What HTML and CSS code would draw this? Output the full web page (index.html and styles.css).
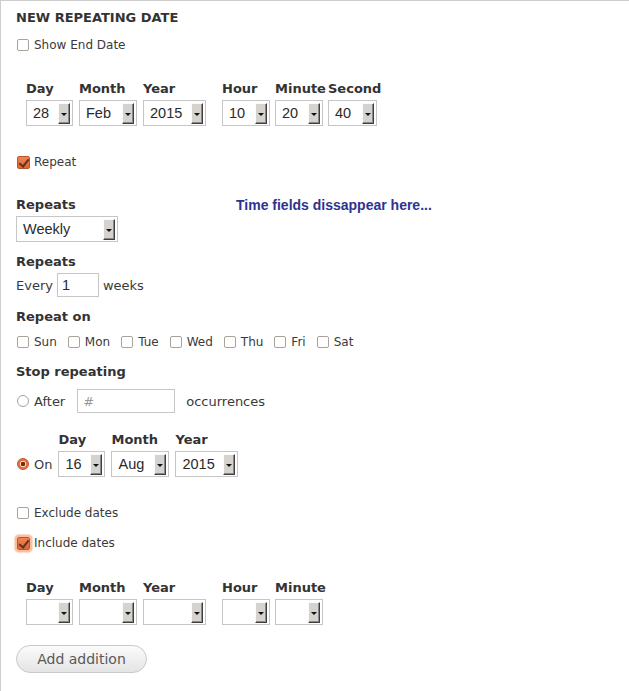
FILE: index.html
```html
<!DOCTYPE html>
<html>
<head>
<meta charset="utf-8">
<title>New repeating date</title>
<link rel="stylesheet" href="styles.css">
</head>
<body>
<div class="panel">
  <h2 class="title">NEW REPEATING DATE</h2>

  <div class="opt show"><span class="cb"></span>Show End Date</div>

  <div class="dt top-dt">
    <div class="fld w-day"><span class="lbl">Day</span><div class="sel"><span class="v">28</span><span class="btn"></span></div></div>
    <div class="fld w-mon"><span class="lbl">Month</span><div class="sel"><span class="v">Feb</span><span class="btn"></span></div></div>
    <div class="fld w-yr"><span class="lbl">Year</span><div class="sel"><span class="v">2015</span><span class="btn"></span></div></div>
    <div class="fld w-hr t-first"><span class="lbl">Hour</span><div class="sel"><span class="v">10</span><span class="btn"></span></div></div>
    <div class="fld w-min t-next"><span class="lbl">Minute</span><div class="sel"><span class="v">20</span><span class="btn"></span></div></div>
    <div class="fld w-sec t-next"><span class="lbl">Second</span><div class="sel"><span class="v">40</span><span class="btn"></span></div></div>
  </div>

  <div class="opt repeat"><span class="cb on"></span>Repeat</div>

  <div class="head-row">
    <span class="h h-col">Repeats</span>
    <span class="note">Time fields dissappear here...</span>
  </div>
  <div class="sel weekly"><span class="v">Weekly</span><span class="btn"></span></div>

  <div class="h h2">Repeats</div>
  <div class="every">
    <span>Every</span>
    <span class="inp every-inp">1</span>
    <span>weeks</span>
  </div>

  <div class="h h3">Repeat on</div>
  <div class="days">
    <span class="opt day"><span class="cb"></span>Sun</span>
    <span class="opt day"><span class="cb"></span>Mon</span>
    <span class="opt day"><span class="cb"></span>Tue</span>
    <span class="opt day"><span class="cb"></span>Wed</span>
    <span class="opt day"><span class="cb"></span>Thu</span>
    <span class="opt day"><span class="cb"></span>Fri</span>
    <span class="opt day"><span class="cb"></span>Sat</span>
  </div>

  <div class="h h4">Stop repeating</div>
  <div class="after">
    <span class="rd"></span><span>After</span>
    <span class="inp after-inp ph">#</span>
    <span class="occ">occurrences</span>
  </div>

  <div class="on-row">
    <div class="on-lbl"><span class="rd on"></span><span>On</span></div>
    <div class="dt">
      <div class="fld w-day"><span class="lbl">Day</span><div class="sel"><span class="v">16</span><span class="btn"></span></div></div>
      <div class="fld w-mon"><span class="lbl">Month</span><div class="sel"><span class="v">Aug</span><span class="btn"></span></div></div>
      <div class="fld w-yr"><span class="lbl">Year</span><div class="sel"><span class="v">2015</span><span class="btn"></span></div></div>
    </div>
  </div>

  <div class="opt exclude"><span class="cb"></span>Exclude dates</div>
  <div class="opt include"><span class="cb on focus"></span>Include dates</div>

  <div class="dt bottom-dt">
    <div class="fld w-day"><span class="lbl">Day</span><div class="sel"><span class="v"></span><span class="btn"></span></div></div>
    <div class="fld w-mon"><span class="lbl">Month</span><div class="sel"><span class="v"></span><span class="btn"></span></div></div>
    <div class="fld w-yr"><span class="lbl">Year</span><div class="sel"><span class="v"></span><span class="btn"></span></div></div>
    <div class="fld w-hr t-first"><span class="lbl">Hour</span><div class="sel"><span class="v"></span><span class="btn"></span></div></div>
    <div class="fld w-min t-next"><span class="lbl">Minute</span><div class="sel"><span class="v"></span><span class="btn"></span></div></div>
  </div>

  <button class="add">Add addition</button>
</div>
</body>
</html>
```

FILE: styles.css
```css
* { box-sizing: border-box; }
html, body { margin: 0; padding: 0; background: #fff; }
body { font-family: "DejaVu Sans", sans-serif; color: #333; }

.panel {
  width: 629px;
  height: 691px;
  border-top: 1px solid #cdcdcd;
  border-left: 1px solid #cdcdcd;
  padding: 9px 0 0 15px;
}

.title {
  margin: 0;
  font-size: 13px;
  font-weight: bold;
  line-height: 16px;
  color: #333;
}

/* checkbox rows */
.opt {
  display: flex;
  align-items: center;
  height: 16px;
  font-size: 12px;
  line-height: 16px;
  color: #3a3a3a;
}
.show { margin-top: 11px; }
.repeat { margin-top: 28px; }
.exclude { margin-top: 28px; }
.include { margin-top: 14px; }

.cb {
  flex: none;
  position: relative;
  width: 12px;
  height: 12px;
  margin: 0 5px 0 1px;
  border: 1px solid #aaa39b;
  border-radius: 2px;
  background: #fff;
}
.cb.on {
  width: 13px;
  height: 13px;
  margin-right: 4px;
  background: linear-gradient(#f08552, #e0642f);
  border-color: #b8552c;
}
.cb.on::after {
  content: "";
  position: absolute;
  left: 3px;
  top: 0px;
  width: 4px;
  height: 8px;
  border: solid #5a3324;
  border-width: 0 2px 2px 0;
  transform: rotate(38deg);
}
.cb.focus {
  box-shadow: 0 0 0 2px #f7bea4, 0 0 1px 3px #fbd9c9;
}

/* radios */
.rd {
  flex: none;
  width: 12px;
  height: 12px;
  margin: 0 5px 0 1px;
  border: 1px solid #a9a29a;
  border-radius: 50%;
  background: #fff;
}
.rd.on {
  border-color: #c0562b;
  background: radial-gradient(circle, #7a2b12 0 2px, #f7d3c2 2.5px 3px, #e8733f 3.5px);
}

/* date fields */
.dt { display: flex; }
.top-dt { margin-top: 28px; margin-left: 10px; }
.bottom-dt { margin-top: 29px; margin-left: 10px; }

.fld { display: flex; flex-direction: column; }
.fld + .fld { margin-left: 6px; }
.fld.t-first { margin-left: 16px; }
.fld.t-next { margin-left: 5px; }

.lbl {
  height: 16px;
  font-size: 13px;
  font-weight: bold;
  line-height: 16px;
  white-space: nowrap;
  margin-bottom: 3px;
  color: #333;
}

.w-day { width: 47px; }
.w-mon { width: 58px; }
.w-yr { width: 63px; }
.w-hr { width: 48px; }
.w-min { width: 48px; }
.w-sec { width: 49px; }

.sel {
  display: flex;
  align-items: center;
  height: 26px;
  padding: 0 2px 0 6px;
  border: 1px solid #c6c6c6;
  background: #fff;
  font-family: "Liberation Sans", Arial, sans-serif;
  font-size: 14.5px;
  color: #2a2a2a;
}
.sel .v { flex: 1; white-space: nowrap; }
.sel .btn {
  flex: none;
  display: flex;
  align-items: center;
  justify-content: center;
  width: 12px;
  height: 21px;
  background: #d6d3ce;
  border: 1px solid;
  border-color: #fbfbfb #3e3e3e #3e3e3e #fbfbfb;
  box-shadow: inset -1px -1px 0 #8a8a8a;
}
.sel .btn::after {
  content: "";
  width: 0;
  height: 0;
  margin-top: 2px;
  border-left: 3px solid transparent;
  border-right: 3px solid transparent;
  border-top: 3px solid #111;
}

/* repeats */
.head-row {
  display: flex;
  align-items: center;
  height: 16px;
  margin-top: 27px;
}
.h {
  font-size: 13px;
  font-weight: bold;
  line-height: 16px;
  color: #333;
}
.h-col { width: 220px; }
.note {
  font-family: "Liberation Sans", Arial, sans-serif;
  font-size: 14px;
  font-weight: bold;
  color: #2e3290;
}
.weekly { width: 102px; margin-top: 3px; }

.h2 { margin-top: 12px; }
.every {
  display: flex;
  align-items: center;
  height: 24px;
  margin-top: 3px;
  font-size: 13px;
  color: #3a3a3a;
}
.inp {
  display: flex;
  align-items: center;
  height: 24px;
  border: 1px solid #c6c6c6;
  background: #fff;
  font-family: "Liberation Sans", Arial, sans-serif;
  font-size: 14.5px;
  color: #2a2a2a;
}
.every-inp { width: 42px; margin: 0 4px; padding-left: 4px; }

.h3 { margin-top: 12px; }
.days {
  display: flex;
  margin-top: 9px;
}
.day { margin-right: 10px; }

.h4 { margin-top: 14px; }
.after {
  display: flex;
  align-items: center;
  height: 24px;
  margin-top: 9px;
  font-size: 13px;
  color: #3a3a3a;
}
.after-inp { width: 98px; margin-left: 12px; padding-left: 5px; }
.ph { color: #9a9a9a; font-family: "DejaVu Sans", sans-serif; font-size: 13px; }
.occ { margin-left: 11px; }

.on-row {
  display: flex;
  align-items: flex-end;
  margin-top: 19px;
}
.on-lbl {
  display: flex;
  align-items: center;
  height: 26px;
  font-size: 13px;
  color: #3a3a3a;
  margin-right: 6px;
}

.add {
  display: block;
  width: 131px;
  height: 28px;
  margin-top: 20px;
  padding: 0;
  border: 1px solid #c9c9c9;
  border-radius: 14px;
  background: linear-gradient(#fbfbfb, #e4e4e4);
  font-family: "DejaVu Sans", sans-serif;
  font-size: 14px;
  color: #595959;
  text-align: center;
}
```
